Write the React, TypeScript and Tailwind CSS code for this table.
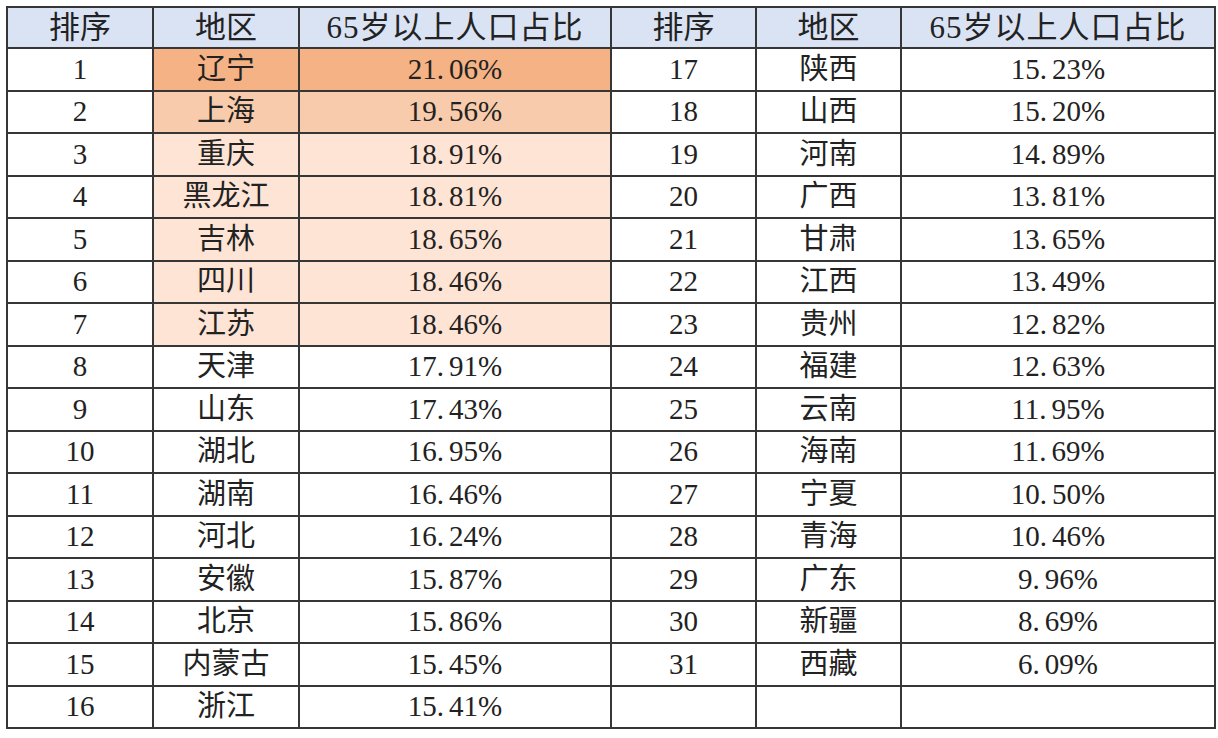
import React from 'react';

type Row = { rank: number; region: string; ratio: string };

const data: Row[] = [
    { rank: 1, region: '辽宁', ratio: '21.06%' },
    { rank: 2, region: '上海', ratio: '19.56%' },
    { rank: 3, region: '重庆', ratio: '18.91%' },
    { rank: 4, region: '黑龙江', ratio: '18.81%' },
    { rank: 5, region: '吉林', ratio: '18.65%' },
    { rank: 6, region: '四川', ratio: '18.46%' },
    { rank: 7, region: '江苏', ratio: '18.46%' },
    { rank: 8, region: '天津', ratio: '17.91%' },
    { rank: 9, region: '山东', ratio: '17.43%' },
    { rank: 10, region: '湖北', ratio: '16.95%' },
    { rank: 11, region: '湖南', ratio: '16.46%' },
    { rank: 12, region: '河北', ratio: '16.24%' },
    { rank: 13, region: '安徽', ratio: '15.87%' },
    { rank: 14, region: '北京', ratio: '15.86%' },
    { rank: 15, region: '内蒙古', ratio: '15.45%' },
    { rank: 16, region: '浙江', ratio: '15.41%' },
    { rank: 17, region: '陕西', ratio: '15.23%' },
    { rank: 18, region: '山西', ratio: '15.20%' },
    { rank: 19, region: '河南', ratio: '14.89%' },
    { rank: 20, region: '广西', ratio: '13.81%' },
    { rank: 21, region: '甘肃', ratio: '13.65%' },
    { rank: 22, region: '江西', ratio: '13.49%' },
    { rank: 23, region: '贵州', ratio: '12.82%' },
    { rank: 24, region: '福建', ratio: '12.63%' },
    { rank: 25, region: '云南', ratio: '11.95%' },
    { rank: 26, region: '海南', ratio: '11.69%' },
    { rank: 27, region: '宁夏', ratio: '10.50%' },
    { rank: 28, region: '青海', ratio: '10.46%' },
    { rank: 29, region: '广东', ratio: '9.96%' },
    { rank: 30, region: '新疆', ratio: '8.69%' },
    { rank: 31, region: '西藏', ratio: '6.09%' },
];

// highlight for the top seven (region + ratio cells only)
const highlight = (rank: number) => {
    if (rank === 1) return 'bg-[#f4b285]';
    if (rank === 2) return 'bg-[#f8cbac]';
    if (rank <= 7) return 'bg-[#fde4d5]';
    return 'bg-white';
};

// SimSun-style percent: a small gap after the decimal point
const Ratio: React.FC<{ value: string }> = ({ value }) => {
    const [whole, rest] = value.split('.');
    return (
        <span>
            {whole}.<span className="ml-[5px]">{rest}</span>
        </span>
    );
};

const cell = 'border-2 border-[#363636] p-0 text-center align-middle';
const headCell = `${cell} bg-[#dae3f3] text-[31px] font-normal leading-none h-[41px]`;

export default function App() {
    const left = data.slice(0, 16);
    const right = data.slice(16);

    return (
        <div className="min-h-screen w-[1218px] h-[738px] bg-white pt-[6px] pl-[6px] font-['Liberation_Serif','Noto_Sans_CJK_SC',serif] text-[#222]">
            <table className="table-fixed border-collapse w-[1208px]">
                <colgroup>
                    <col className="w-[146px]" />
                    <col className="w-[146px]" />
                    <col className="w-[312px]" />
                    <col className="w-[145px]" />
                    <col className="w-[145px]" />
                    <col className="w-[314px]" />
                </colgroup>
                <thead>
                    <tr className="h-[41px]">
                        <th className={headCell}>排序</th>
                        <th className={headCell}>地区</th>
                        <th className={`${headCell} tracking-[1px]`}>65岁以上人口占比</th>
                        <th className={headCell}>排序</th>
                        <th className={headCell}>地区</th>
                        <th className={`${headCell} tracking-[1px]`}>65岁以上人口占比</th>
                    </tr>
                </thead>
                <tbody>
                    {left.map((row, i) => {
                        const r = right[i];
                        return (
                            <tr key={row.rank} className="h-[42.5px] text-[29px] leading-none">
                                <td className={`${cell} bg-white`}>{row.rank}</td>
                                <td className={`${cell} ${highlight(row.rank)}`}>{row.region}</td>
                                <td className={`${cell} ${highlight(row.rank)}`}>
                                    <Ratio value={row.ratio} />
                                </td>
                                <td className={cell}>{r ? r.rank : ''}</td>
                                <td className={cell}>{r ? r.region : ''}</td>
                                <td className={cell}>{r ? <Ratio value={r.ratio} /> : ''}</td>
                            </tr>
                        );
                    })}
                </tbody>
            </table>
        </div>
    );
}
